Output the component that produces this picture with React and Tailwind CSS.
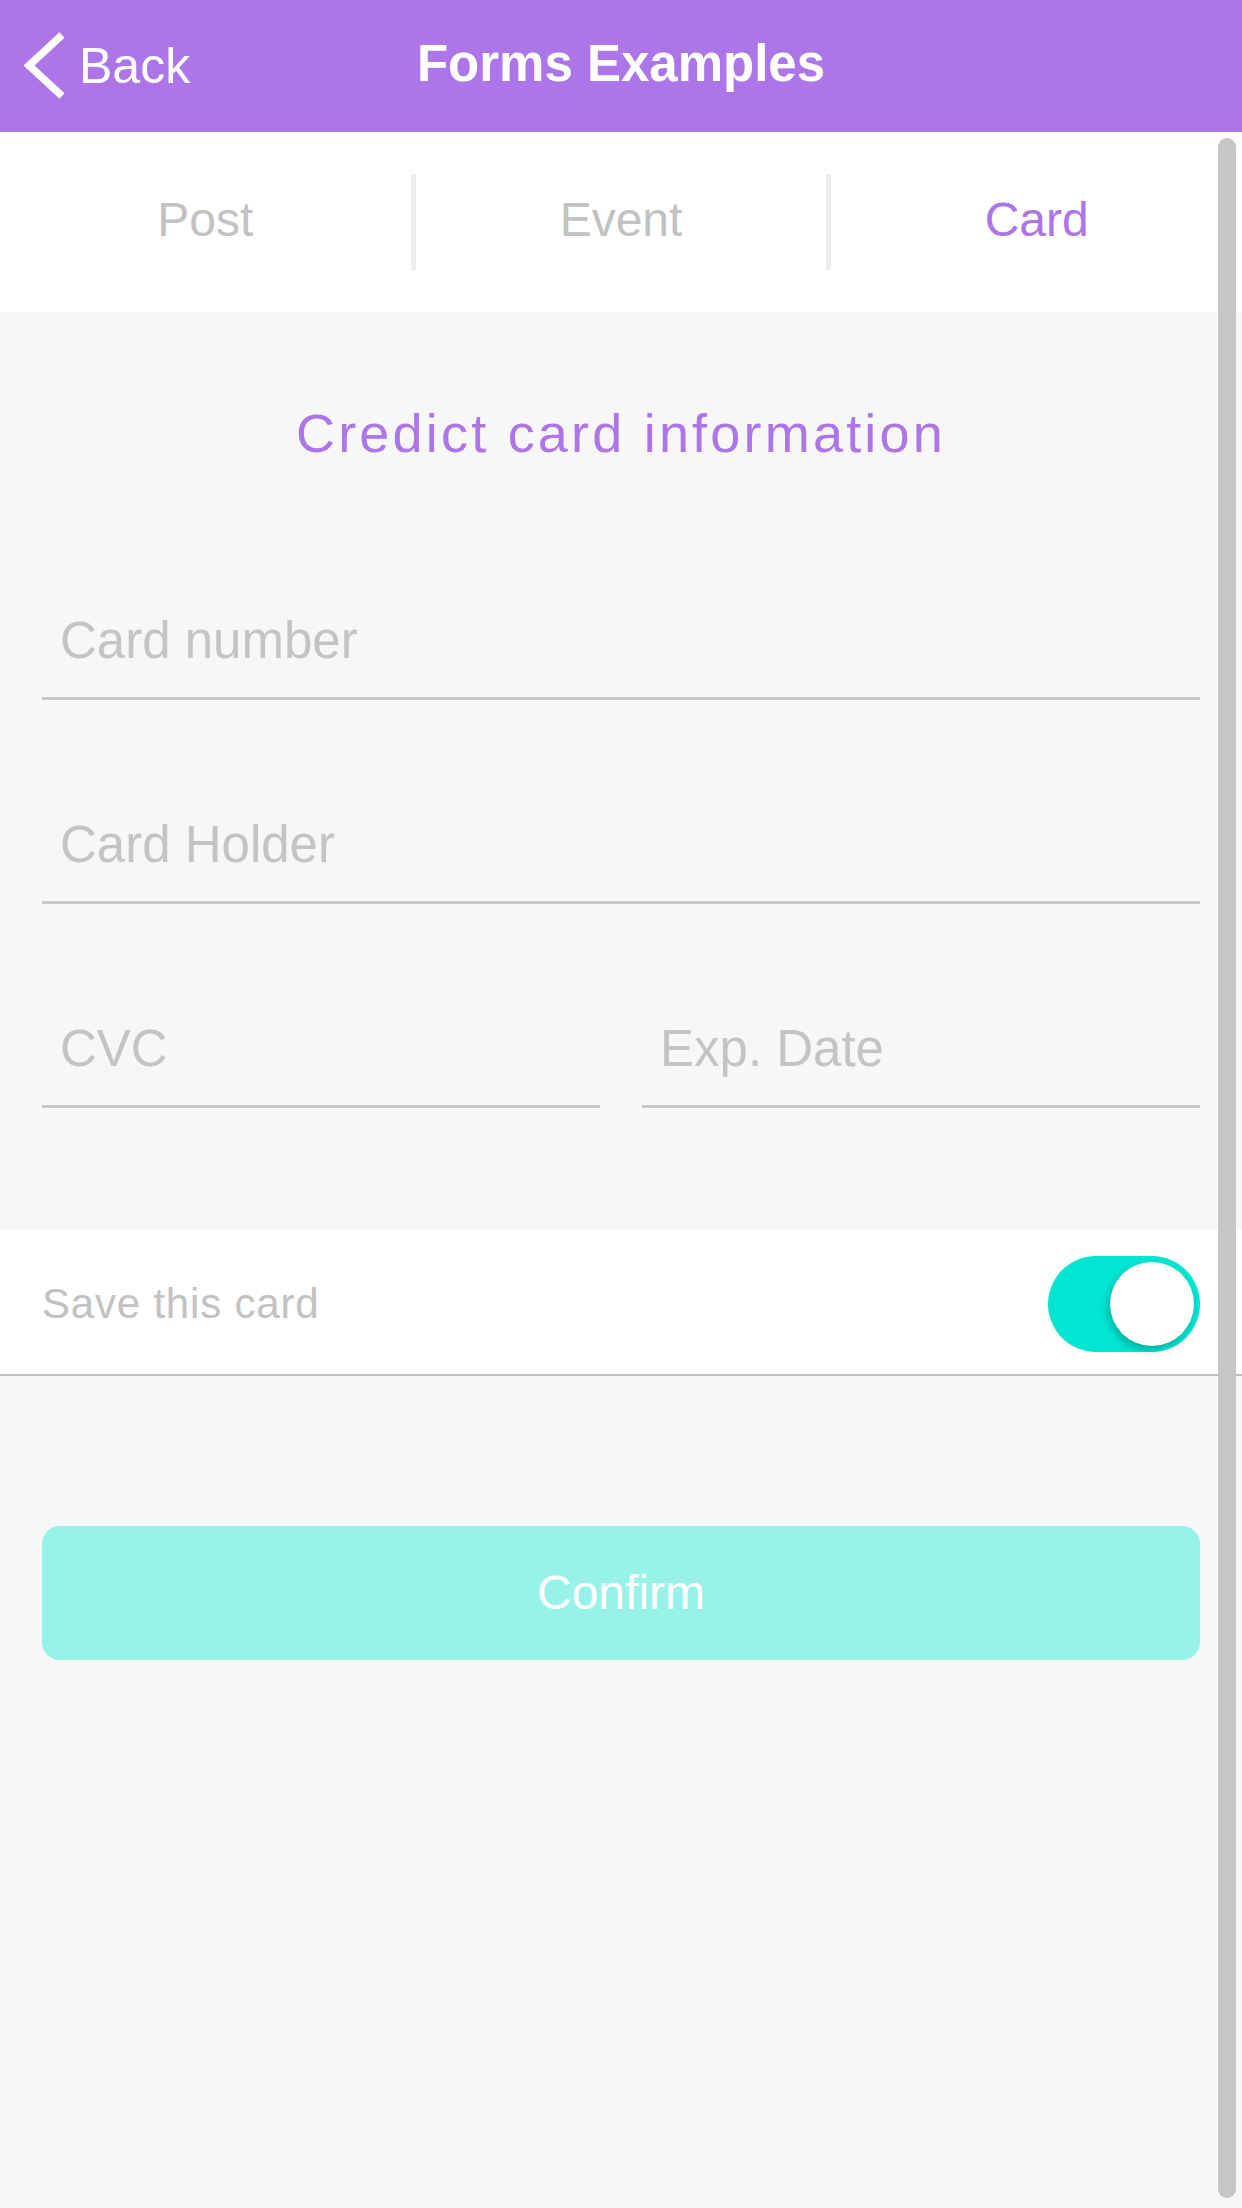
import React, { useState } from "react";

function Field({ placeholder, className = "" }) {
  return (
    <input
      type="text"
      placeholder={placeholder}
      className={
        "block h-[117px] w-full border-b-[3px] border-[#c8c8cc] bg-transparent pl-[18px] text-[51px] leading-none text-[#999] outline-none placeholder:text-[#c4c4c4] " +
        className
      }
    />
  );
}

export default function App() {
  const [on, setOn] = useState(true);
  return (
    <div
      className="relative h-[2208px] w-[1242px] overflow-hidden bg-[#f7f7f7]"
      style={{ fontFamily: '"Liberation Sans", Arial, Helvetica, sans-serif' }}
    >
      {/* Header */}
      <header className="grid h-[132px] grid-cols-[1fr_auto_1fr] items-center bg-[#ad76e8] px-[22px] text-white">
        <button className="flex items-center">
          <svg width="44" height="70" viewBox="0 0 44 70" fill="none">
            <path d="M40 4 L7 34.5 L40 65" stroke="white" strokeWidth="7.5" strokeLinejoin="miter" />
          </svg>
          <span className="ml-[13px] text-[50px] leading-none">Back</span>
        </button>
        <h1 className="pb-[5px] text-[51px] font-bold leading-none">Forms Examples</h1>
        <div />
      </header>

      {/* Tabs */}
      <nav className="flex h-[180px] items-stretch bg-white">
        <button className="flex flex-1 items-center justify-center pb-[4px] text-[48px] leading-none text-[#c2c2c2]">
          Post
        </button>
        <div className="h-[96px] w-[5px] self-center bg-[#ececec]" />
        <button className="flex flex-1 items-center justify-center pb-[4px] text-[48px] leading-none text-[#c2c2c2]">
          Event
        </button>
        <div className="h-[96px] w-[5px] self-center bg-[#ececec]" />
        <button className="flex flex-1 items-center justify-center pb-[4px] text-[48px] leading-none text-[#ad76e8]">
          Card
        </button>
      </nav>

      {/* Title */}
      <h2 className="mt-[94px] text-center text-[54px] leading-none tracking-[3.2px] text-[#ad76e8]">
        Credict card information
      </h2>

      {/* Fields */}
      <div className="mt-[123px] flex flex-col gap-[87px] px-[42px]">
        <Field placeholder="Card number" />
        <Field placeholder="Card Holder" />
        <div className="grid grid-cols-2 gap-[42px]">
          <Field placeholder="CVC" />
          <Field placeholder="Exp. Date" />
        </div>
      </div>

      {/* Save this card */}
      <div className="mt-[121px] flex h-[147px] items-center justify-between border-b-2 border-[#bebebe] bg-white px-[42px] pt-[4px]">
        <span className="text-[42px] leading-none tracking-[0.8px] text-[#c2c2c2]">Save this card</span>
        <button
          role="switch"
          aria-checked={on}
          onClick={() => setOn(!on)}
          className={
            "flex h-[96px] w-[152px] items-center rounded-full px-[6px] " +
            (on ? "justify-end bg-[#00e6d3]" : "justify-start bg-[#e5e5e5]")
          }
        >
          <span className="block h-[84px] w-[84px] rounded-full bg-white shadow-[-2px_4px_8px_rgba(0,0,0,0.25)]" />
        </button>
      </div>

      {/* Confirm */}
      <div className="mt-[150px] px-[42px]">
        <button className="flex h-[134px] w-full items-center justify-center rounded-[18px] bg-[#97f2e9] text-[48px] leading-none text-white">
          Confirm
        </button>
      </div>

      {/* Scrollbar overlay */}
      <div className="absolute left-[1218px] top-[138px] h-[2060px] w-[18px] rounded-full bg-[#c6c6c6]" />
    </div>
  );
}
